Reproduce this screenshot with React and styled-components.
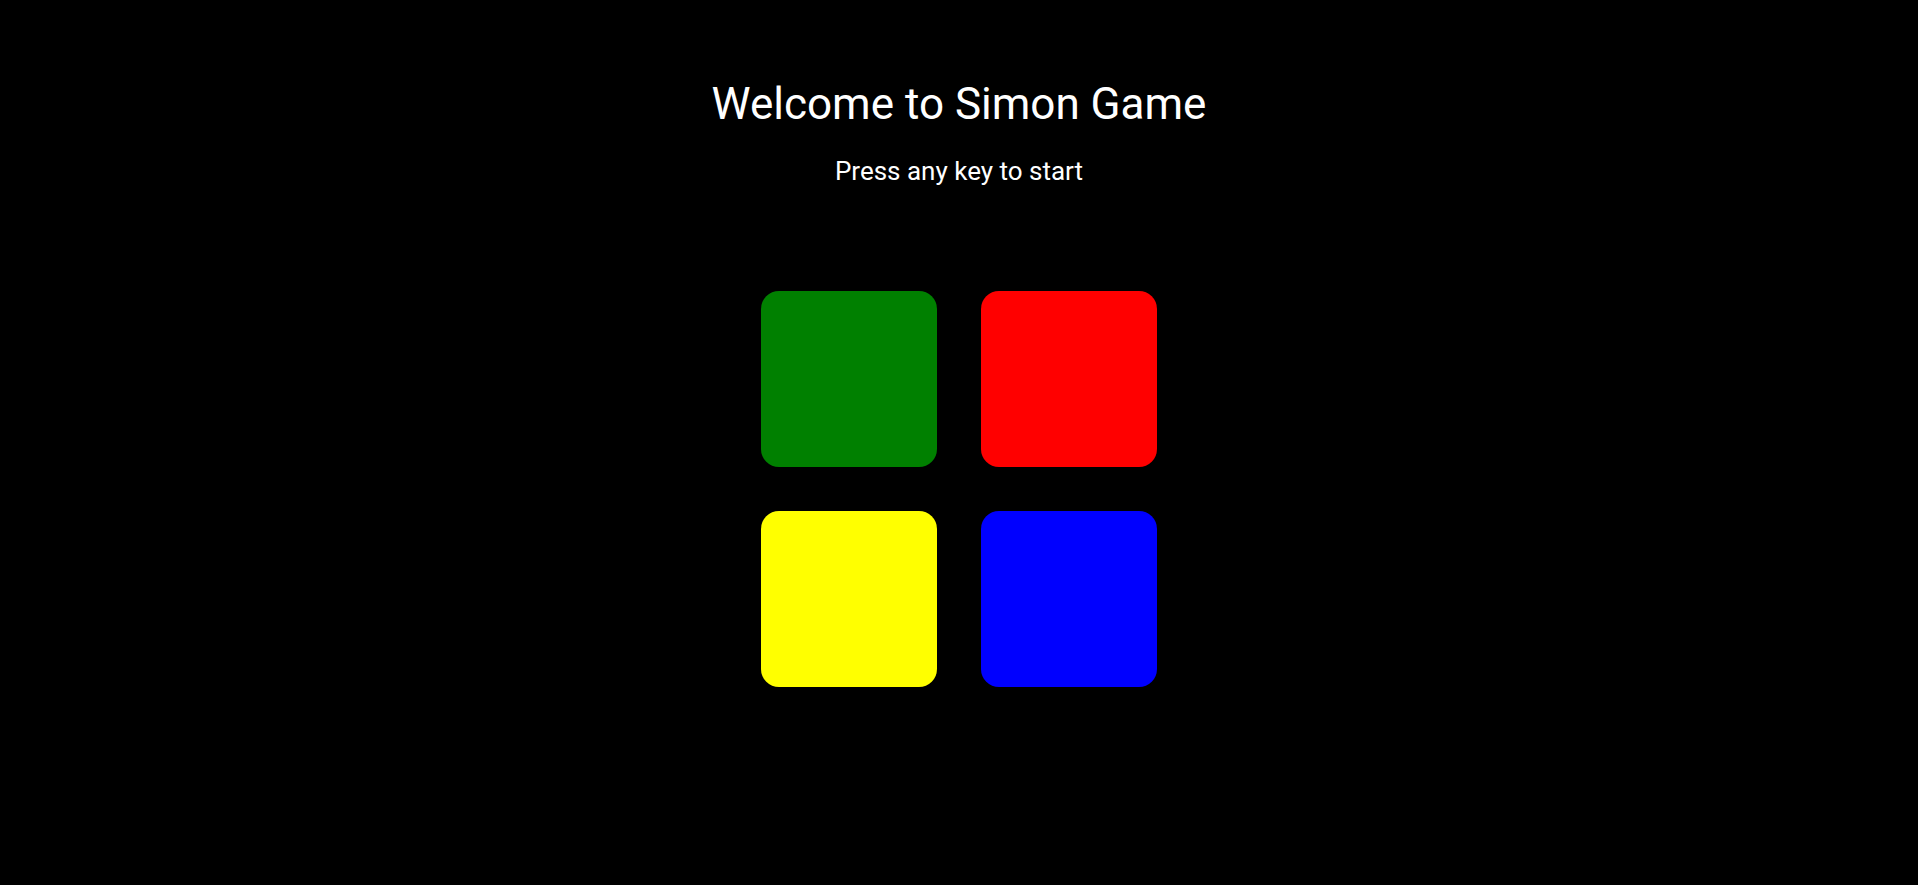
import React from 'react'
import styled, { createGlobalStyle } from 'styled-components'

const GlobalStyle = createGlobalStyle`
  html, body {
    margin: 0;
    padding: 0;
    background: #000;
  }
  body {
    font-family: Roboto, "Liberation Sans", sans-serif;
    color: #fff;
  }
`;

const Page = styled.div`
  min-height: 885px;
  display: flex;
  flex-direction: column;
  align-items: center;
  padding-top: 78px;
  box-sizing: border-box;
`;

const Title = styled.h1`
  margin: 0;
  font-size: 44px;
  font-weight: 400;
  line-height: 52px;
`;

const Subtitle = styled.p`
  margin: 26px 0 0;
  font-size: 26px;
  font-weight: 400;
  line-height: 30px;
`;

const Board = styled.div`
  margin-top: 105px;
  display: grid;
  grid-template-columns: repeat(2, 176px);
  grid-auto-rows: 176px;
  gap: 44px;
`;

const Pad = styled.div`
  background: ${props => props.$color};
  border-radius: 18px;
  cursor: pointer;
`;

const pads = ['green', 'red', 'yellow', 'blue'];

const App = () => {
  return (
    <>
      <GlobalStyle />
      <Page>
        <Title>Welcome to Simon Game</Title>
        <Subtitle>Press any key to start</Subtitle>
        <Board>
          {pads.map(c => (
            <Pad key={c} $color={c} />
          ))}
        </Board>
      </Page>
    </>
  );
};

export default App;
